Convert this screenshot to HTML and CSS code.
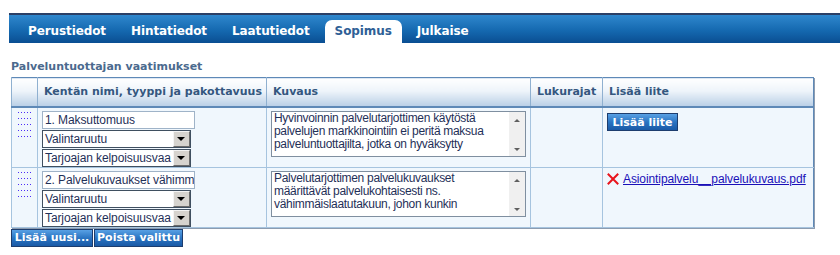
FILE: index.html
```html
<!DOCTYPE html>
<html lang="fi">
<head>
<meta charset="utf-8">
<title>Sopimus</title>
<link rel="stylesheet" href="styles.css">
</head>
<body>
<div class="page">
  <nav class="tabs">
    <span class="tab">Perustiedot</span>
    <span class="tab">Hintatiedot</span>
    <span class="tab">Laatutiedot</span>
    <span class="tab active">Sopimus</span>
    <span class="tab">Julkaise</span>
  </nav>

  <h2 class="section-title">Palveluntuottajan vaatimukset</h2>

  <table class="req">
    <colgroup>
      <col class="c-handle"><col class="c-name"><col class="c-desc"><col class="c-limit"><col class="c-att">
    </colgroup>
    <thead>
      <tr>
        <th></th>
        <th>Kentän nimi, tyyppi ja pakottavuus</th>
        <th>Kuvaus</th>
        <th>Lukurajat</th>
        <th>Lisää liite</th>
      </tr>
    </thead>
    <tbody>
      <tr>
        <td class="handle"><span class="dots"><i></i><i></i><i></i><i></i><i></i></span></td>
        <td class="fields">
          <div class="textin">1. Maksuttomuus</div>
          <div class="sel"><span class="val">Valintaruutu</span><span class="arrow"></span></div>
          <div class="sel"><span class="val">Tarjoajan kelpoisuusvaa</span><span class="arrow"></span></div>
        </td>
        <td class="desc">
          <div class="area">
            <div class="area-text">Hyvinvoinnin palvelutarjottimen käytöstä palvelujen markkinointiin ei peritä maksua palveluntuottajilta, jotka on hyväksytty</div>
            <div class="scroll"><span class="up"></span><span class="down"></span></div>
          </div>
        </td>
        <td></td>
        <td class="att"><button class="btn">Lisää liite</button></td>
      </tr>
      <tr>
        <td class="handle"><span class="dots"><i></i><i></i><i></i><i></i><i></i></span></td>
        <td class="fields">
          <div class="textin">2. Palvelukuvaukset vähimm</div>
          <div class="sel"><span class="val">Valintaruutu</span><span class="arrow"></span></div>
          <div class="sel"><span class="val">Tarjoajan kelpoisuusvaa</span><span class="arrow"></span></div>
        </td>
        <td class="desc">
          <div class="area">
            <div class="area-text">Palvelutarjottimen palvelukuvaukset määrittävät palvelukohtaisesti ns. vähimmäislaatutakuun, johon kunkin</div>
            <div class="scroll"><span class="up"></span><span class="down"></span></div>
          </div>
        </td>
        <td></td>
        <td class="att">
          <div class="file">
            <svg class="del" width="12" height="12" viewBox="0 0 12 12"><path d="M1.5 1.5 L10.5 10.5 M10.5 1.5 L1.5 10.5" stroke="#e8141c" stroke-width="2" stroke-linecap="square"/></svg>
            <a href="#">Asiointipalvelu__palvelukuvaus.pdf</a>
          </div>
        </td>
      </tr>
    </tbody>
  </table>

  <div class="actions">
    <button class="btn">Lisää uusi...</button>
    <button class="btn">Poista valittu</button>
  </div>
</div>
</body>
</html>
```

FILE: styles.css
```css
* { box-sizing: border-box; }

body {
  margin: 0;
  background: #ffffff;
  font-family: "DejaVu Sans", Verdana, sans-serif;
}

.page {
  padding: 13px 0 0 9px;
}

/* Tabs */
.tabs {
  display: flex;
  align-items: flex-end;
  gap: 5px;
  height: 30px;
  padding-left: 9px;
  border-top: 2px solid #2b3f66;
  background: linear-gradient(#2f87cd, #1569b0 55%, #0a4e92);
}

.tab {
  height: 23px;
  line-height: 22px;
  padding: 0 10px;
  color: #ffffff;
  font-size: 12px;
  font-weight: bold;
  letter-spacing: -0.1px;
  white-space: nowrap;
}

.tab.active {
  background: #ffffff;
  color: #2f5f96;
  border-radius: 7px 7px 0 0;
}

/* Section title */
.section-title {
  margin: 17px 0 0 2px;
  height: 17px;
  font-size: 11px;
  line-height: 14px;
  font-weight: bold;
  color: #4b6a8e;
}

/* Table */
.req {
  margin-left: 2px;
  width: 802px;
  border-collapse: collapse;
  table-layout: fixed;
  border: 1px solid #5e89b7;
  box-shadow: 1px 1px 0 #8c9cb0;
}

.c-handle { width: 26px; }
.c-name { width: 229px; }
.c-desc { width: 264px; }
.c-limit { width: 72px; }
.c-att { width: 211px; }

.req th {
  height: 29px;
  padding: 0 0 0 6px;
  text-align: left;
  font-size: 11px;
  font-weight: bold;
  color: #34577f;
  background: linear-gradient(#ffffff, #eef4fa 45%, #b9cfe6);
  border-left: 1px solid #8fb0d0;
  border-bottom: 2px solid #5e89b7;
  white-space: nowrap;
}

.req td {
  height: 57px;
  padding: 3px 4px 0;
  vertical-align: top;
  background: #f0f7fd;
  border-left: 1px solid #a6c4df;
  border-bottom: 1px solid #a6c4df;
}

/* drag handle */
.req td.handle { padding: 4px 0 0 6px; }

.dots {
  display: flex;
  flex-direction: column;
  gap: 5px;
}

.dots i {
  display: block;
  width: 15px;
  height: 1px;
  background: repeating-linear-gradient(90deg, #4b2cf8 0 1px, transparent 1px 3px);
}

/* field controls */
.fields, .area-text, .file a {
  font-family: "Liberation Sans", Arial, sans-serif;
}

.textin {
  width: 153px;
  height: 18px;
  padding: 0 2px;
  font-size: 12px;
  letter-spacing: -0.1px;
  line-height: 17px;
  color: #1f3058;
  background: #ffffff;
  border: 1px solid #9fb3c8;
  white-space: nowrap;
  overflow: hidden;
}

.sel {
  display: flex;
  width: 149px;
  height: 18px;
  margin-top: 1px;
  background: #ffffff;
  border: 1px solid #3f4f60;
}

.sel .val {
  flex: 1;
  padding: 0 2px;
  font-size: 12px;
  letter-spacing: -0.1px;
  line-height: 16px;
  color: #1f3058;
  white-space: nowrap;
  overflow: hidden;
}

.sel .arrow {
  position: relative;
  flex: none;
  width: 17px;
  background: #d6d3ce;
  border: 1px solid;
  border-color: #f4f4f4 #6c6c6c #6c6c6c #f4f4f4;
}

.sel .arrow::after {
  content: "";
  position: absolute;
  left: 3px;
  top: 5px;
  border-left: 4px solid transparent;
  border-right: 4px solid transparent;
  border-top: 4px solid #000000;
}

/* description textarea */
.area {
  display: flex;
  width: 255px;
  height: 46px;
  background: #ffffff;
  border: 1px solid #7f8fa0;
}

.area-text {
  flex: 1;
  padding: 0 2px;
  font-size: 12px;
  letter-spacing: -0.3px;
  line-height: 13px;
  color: #1f3058;
  overflow: hidden;
}

.scroll {
  display: flex;
  flex-direction: column;
  justify-content: space-between;
  flex: none;
  width: 16px;
  padding: 7px 0 5px;
  background: #f0f0f0;
}

.scroll span {
  align-self: center;
  width: 0;
  height: 0;
  border-left: 3px solid transparent;
  border-right: 3px solid transparent;
}

.scroll .up { border-bottom: 3px solid #606060; }
.scroll .down { border-top: 3px solid #606060; }

/* buttons */
.btn {
  height: 18px;
  padding: 0 6px;
  font-family: "DejaVu Sans", Verdana, sans-serif;
  font-size: 11px;
  font-weight: bold;
  color: #ffffff;
  background: linear-gradient(#58a0e4, #2a74c2 50%, #1a5aa6);
  border: 1px solid #1d3d6e;
  border-radius: 0;
  cursor: pointer;
}

.att .btn { width: 71px; padding: 0; }

.file {
  display: flex;
  align-items: center;
  gap: 4px;
  padding-top: 1px;
}

.file .del { flex: none; }

.file a {
  font-size: 12px;
  letter-spacing: -0.1px;
  color: #1a10b8;
  text-decoration: underline;
}

.actions {
  display: flex;
  gap: 1px;
  margin: 1px 0 0 2px;
}

.actions .btn:first-child { width: 82px; padding: 0; }
.actions .btn:last-child { width: 89px; padding: 0; }
```
